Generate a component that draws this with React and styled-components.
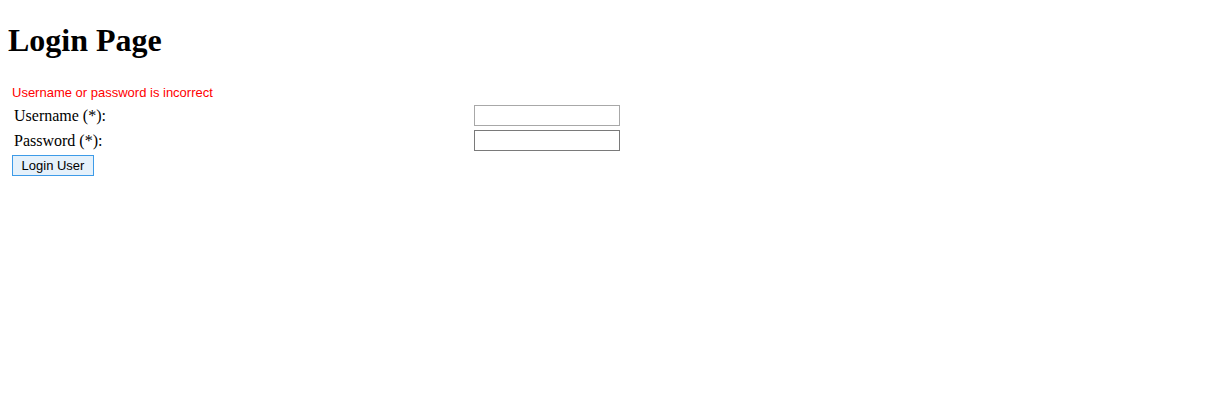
import React from "react";
import styled, { createGlobalStyle } from "styled-components";

const GlobalStyle = createGlobalStyle`
  body {
    margin: 8px;
    background: #fff;
    color: #000;
    font-family: "Liberation Serif", "Times New Roman", serif;
  }
`;

const Title = styled.h1`
  font-size: 32px;
  font-weight: bold;
  margin: 14px 0 22px;
  line-height: 37px;
`;

const Form = styled.form`
  display: grid;
  grid-template-columns: 462px 150px;
  grid-auto-rows: auto;
  row-gap: 4px;
  padding: 2px 4px;
  width: max-content;
`;

const ErrorText = styled.div`
  grid-column: 1 / -1;
  padding-top: 2px;
  color: #ff0000;
  font-family: "Liberation Sans", Arial, sans-serif;
  font-size: 13px;
  line-height: 16px;
`;

const Label = styled.label`
  display: flex;
  align-items: center;
  padding-left: 2px;
  font-size: 16px;
  height: 21px;
`;

const Field = styled.input`
  box-sizing: border-box;
  width: 146px;
  height: 21px;
  margin: 0;
  padding: 1px 2px;
  border: 1px solid ${props => (props.$dark ? "#7a7a7a" : "#a8a8a8")};
  font-family: "Liberation Sans", Arial, sans-serif;
  font-size: 13px;
  background: #fff;
  outline: none;
`;

const Button = styled.button`
  grid-column: 1 / -1;
  justify-self: start;
  box-sizing: border-box;
  width: 82px;
  height: 21px;
  margin: 0;
  padding: 0;
  border: 1px solid #3d9be8;
  background: #e5f1fb;
  color: #000;
  font-family: "Liberation Sans", Arial, sans-serif;
  font-size: 13px;
  line-height: 19px;
`;

export default function App() {
  return (
    <>
      <GlobalStyle />
      <Title>Login Page</Title>
      <Form onSubmit={e => e.preventDefault()}>
        <ErrorText>Username or password is incorrect</ErrorText>
        <Label htmlFor="username">Username (*):</Label>
        <Field id="username" type="text" />
        <Label htmlFor="password">Password (*):</Label>
        <Field id="password" type="password" $dark />
        <Button type="submit">Login User</Button>
      </Form>
    </>
  );
}
